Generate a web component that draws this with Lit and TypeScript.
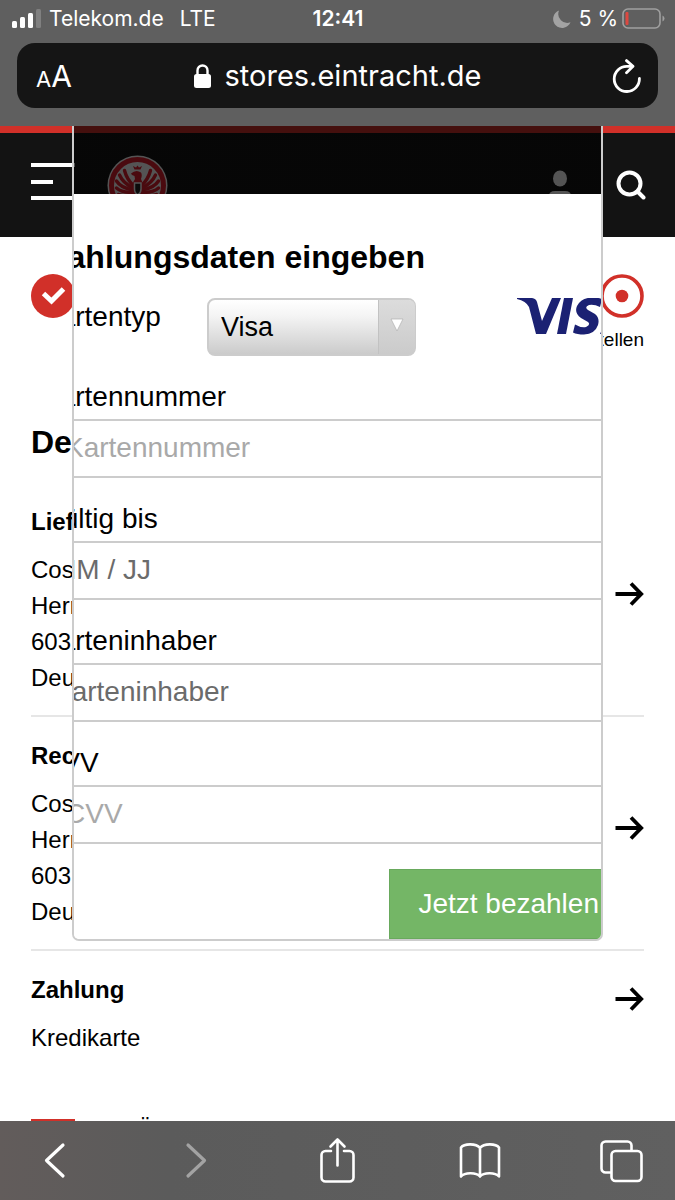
import { LitElement, html, css, svg } from "lit";
import { customElement } from "lit/decorators.js";

interface Section {
  title: string;
  lines: string[];
}

interface Field {
  id: string;
  label: string;
  placeholder: string;
  tone: string;
}

const SECTIONS: Section[] = [
  { title: "Lieferadresse", lines: ["Cos", "Herr", "603", "Deutschland"] },
  { title: "Rechnungsadresse", lines: ["Cos", "Herr", "603", "Deutschland"] },
  { title: "Zahlung", lines: ["Kredikarte"] },
];

const FIELDS: Field[] = [
  { id: "number", label: "Kartennummer", placeholder: "Kartennummer", tone: "secure" },
  { id: "expiry", label: "Gültig bis", placeholder: "MM / JJ", tone: "plain" },
  { id: "holder", label: "Karteninhaber", placeholder: "Karteninhaber", tone: "plain" },
  { id: "cvv", label: "CVV", placeholder: "CVV", tone: "secure" },
];

@customElement("status-bar")
class StatusBar extends LitElement {
  static styles = css`
    :host {
      display: grid;
      grid-template-columns: 1fr auto 1fr;
      align-items: center;
      height: 37px;
      padding: 0 10px 0 11px;
      color: #fff;
      font-size: 21px;
    }
    .side {
      display: flex;
      align-items: center;
    }
    .end {
      justify-content: flex-end;
      gap: 4px;
    }
    .network {
      margin-left: 16px;
    }
    .signal {
      margin-right: 7px;
    }
    .time {
      font-weight: 600;
    }
    .moon {
      margin-right: 4px;
    }
    svg {
      display: block;
    }
  `;

  render() {
    return html`
      <div class="side">
        <svg class="signal" width="31" height="20" viewBox="0 0 31 20" fill="#fff">
          <rect x="1" y="12" width="5" height="7" rx="1.5" />
          <rect x="9" y="8" width="5" height="11" rx="1.5" />
          <rect x="17" y="4" width="5" height="15" rx="1.5" />
          <rect x="25" y="0" width="5" height="19" rx="1.5" fill="#808080" />
        </svg>
        <span>Telekom.de</span>
        <span class="network">LTE</span>
      </div>
      <span class="time">12:41</span>
      <div class="side end">
        <svg class="moon" width="18" height="18" viewBox="0 0 18 18">
          <path d="M6 0.5 A9 9 0 1 0 17.5 12.3 A9 9 0 0 1 6 0.5 Z" fill="#a3a3a3" />
        </svg>
        <span>5 %</span>
        <svg width="43" height="21" viewBox="0 0 43 21">
          <rect x="1" y="1" width="37" height="19" rx="5" fill="none" stroke="#a0a0a0" stroke-width="1.6" />
          <rect x="3.5" y="4" width="3" height="13" rx="1" fill="#dc4840" />
          <path d="M40.5 7.5 Q42.5 8.5 42.5 10.5 T40.5 13.5 Z" fill="#a0a0a0" />
        </svg>
      </div>
    `;
  }
}

@customElement("address-bar")
class AddressBar extends LitElement {
  static styles = css`
    :host {
      display: grid;
      grid-template-columns: 1fr auto 1fr;
      align-items: center;
      height: 65px;
      margin: 6px 17px 18px;
      padding: 0 16px;
      box-sizing: border-box;
      border-radius: 18px;
      background: #151515;
      color: #fff;
    }
    button {
      justify-self: start;
      border: 0;
      padding: 0 3px;
      background: none;
      color: inherit;
      font-family: inherit;
      font-size: 30px;
    }
    .reload {
      justify-self: end;
      padding: 0;
    }
    .small {
      font-size: 22px;
    }
    .address {
      display: flex;
      align-items: center;
      gap: 14px;
      font-size: 29px;
    }
    svg {
      display: block;
    }
  `;

  render() {
    return html`
      <button aria-label="Darstellung"><span class="small">A</span>A</button>
      <div class="address">
        <svg width="17" height="24" viewBox="0 0 17 24">
          <rect x="0" y="10" width="17" height="14" rx="2.5" fill="#fff" />
          <path d="M3.5 11 V6.5 a5 5 0 0 1 10 0 V11" fill="none" stroke="#fff" stroke-width="2.4" />
        </svg>
        <span>stores.eintracht.de</span>
      </div>
      <button class="reload" aria-label="Neu laden">
        <svg width="30" height="34" viewBox="0 0 30 34" fill="none" stroke="#fff" stroke-width="2.8" stroke-linecap="round" stroke-linejoin="round">
          <path d="M27.4 19.5 a12.6 12.6 0 1 1 -12.4 -12.2 h5.5" />
          <path d="M14.5 1.6 L21 7.3 L14.5 13.8" />
        </svg>
      </button>
    `;
  }
}

@customElement("browser-toolbar")
class BrowserToolbar extends LitElement {
  static styles = css`
    :host {
      display: flex;
      align-items: center;
      justify-content: space-between;
      height: 79px;
      padding: 0 32px 0 33px;
      box-sizing: border-box;
      background: linear-gradient(90deg, #625c5b, #5b5b5b 25%, #5d5d5d 60%, #606060);
    }
    button {
      width: 44px;
      height: 48px;
      padding: 0;
      border: 0;
      background: none;
      color: #fff;
    }
    .inactive {
      color: #a3a3a3;
    }
    svg {
      display: block;
    }
  `;

  private icon(label: string, drawing: unknown, cls = "") {
    return html`<button class=${cls} aria-label=${label}>
      <svg width="44" height="48" viewBox="0 0 44 48" fill="none" stroke="currentColor" stroke-width="2.6" stroke-linecap="round" stroke-linejoin="round">${drawing}</svg>
    </button>`;
  }

  render() {
    return html`
      ${this.icon("Zurück", svg`<path d="M30 8 L13.5 23.5 L30 39" stroke-width="3.2" />`)}
      ${this.icon("Vorwärts", svg`<path d="M13 8 L29.5 23.5 L13 39" stroke-width="3.2" />`, "inactive")}
      ${this.icon("Teilen", svg`<path d="M15 14 H9.5 a4 4 0 0 0 -4 4 V40.5 a4 4 0 0 0 4 4 H33.5 a4 4 0 0 0 4 -4 V18 a4 4 0 0 0 -4 -4 H28 M21.5 28.5 V2.5 M14.5 9.5 L21.5 2.5 L28.5 9.5" />`)}
      ${this.icon("Lesezeichen", svg`<path d="M22 39.500 C18.500 35.500 7 35 3 39.500 V10.500 C6 6.500 18 6 22 11 C26 6 38 6.500 41 10.500 V39.500 C37 35 25.500 35.500 22 39.500 V11" />`)}
      ${this.icon("Tabs", svg`<path d="M11.500 35.500 H6.500 a4 4 0 0 1 -4 -4 V8.500 a4 4 0 0 1 4 -4 H28.500 a4 4 0 0 1 4 4 V13" /><rect x="12.500" y="14" width="30" height="30" rx="4" />`)}
    `;
  }
}

@customElement("shop-header")
class ShopHeader extends LitElement {
  static styles = css`
    :host {
      display: flex;
      align-items: center;
      height: 104px;
      padding: 0 29px 0 31px;
      border-top: 7px solid #d13029;
      background: #131313;
    }
    button,
    a {
      display: block;
      padding: 0;
      border: 0;
      background: none;
    }
    .logo {
      flex: 1;
      margin-left: 32px;
    }
    .search {
      margin-left: 44px;
    }
    svg {
      display: block;
    }
  `;

  private wing() {
    return svg`
      <g fill="none" stroke="#e01e2d" stroke-width="3.4" stroke-linecap="round">
        <path d="M27 31 Q20 25 17.500 15.500" />
        <path d="M26 33 Q16 28 12.500 20" />
        <path d="M26 35 Q14 33 9.500 26" />
        <path d="M26 37 Q15 38 9.500 33" />
        <path d="M26 38 Q17 42 11.500 39.500" />
        <path d="M27 39 Q20 45 16 45" />
      </g>
    `;
  }

  render() {
    return html`
      <button aria-label="Menü">
        <svg width="44" height="44" viewBox="0 0 44 44" fill="#fff">
          <rect width="44" height="4" />
          <rect y="17" width="22" height="4" />
          <rect y="33" width="44" height="4" />
        </svg>
      </button>
      <a class="logo" href="#" aria-label="Startseite">
        <svg width="61" height="61" viewBox="0 0 61 61">
          <circle cx="30.5" cy="30.5" r="30" fill="#fff" />
          <circle cx="30.500" cy="30.500" r="26" fill="#fff" stroke="#e01e2d" stroke-width="5" />
          ${this.wing()}
          <g transform="translate(61 0) scale(-1 1)">${this.wing()}</g>
          <g fill="#e01e2d">
            <path d="M27.500 14.500 L26 11 L29 12.500 L30.500 10.500 L32 12.500 L35 11 L33.500 14.500 Z" />
            <path d="M25 20 L24 18.500 Q29 14 34 17.500 Q35.500 20 34 24 L37 31 L36 42 L30.500 52 L25 42 L24 31 L28 24 L27.500 21 Z" />
          </g>
          <path d="M27.500 28 h6.500 v6 q0 4 -3.200 6 q-3.300 -2 -3.300 -6 Z" fill="#222" stroke="#fff" stroke-width="1.500" />
        </svg>
      </a>
      <button aria-label="Konto">
        <svg width="24" height="30" viewBox="0 0 24 30" fill="#fff">
          <ellipse cx="12" cy="8.500" rx="7" ry="8" />
          <path d="M1 30 V26 Q1 21 7 21 H17 Q23 21 23 26 V30 Z" />
        </svg>
      </button>
      <button class="search" aria-label="Suche">
        <svg width="30" height="30" viewBox="0 0 30 30" fill="none" stroke="#fff" stroke-width="4" stroke-linecap="round">
          <circle cx="13.500" cy="13.500" r="11" />
          <path d="M21.500 21.500 L27.500 27.500" />
        </svg>
      </button>
    `;
  }
}

@customElement("checkout-page")
class CheckoutPage extends LitElement {
  static styles = css`
    :host {
      display: block;
      padding: 37px 31px 0;
      color: #000;
      font-size: 24px;
      line-height: 36px;
    }
    .steps {
      display: flex;
      justify-content: space-between;
      height: 78px;
      margin: 0 0 70px;
      padding: 0;
      list-style: none;
    }
    .step {
      display: flex;
      flex-direction: column;
      gap: 10px;
      align-items: flex-end;
      font-size: 19px;
      line-height: 24px;
    }
    h1 {
      margin: 0 0 21px;
      font-size: 32px;
      line-height: 40px;
    }
    section {
      display: flex;
      align-items: center;
      justify-content: space-between;
      border-bottom: 2px solid #e6e6e6;
      background: #fff;
    }
    .text {
      padding: 21px 0 19px;
    }
    section:last-of-type {
      border: 0;
    }
    section:last-of-type .text {
      padding-bottom: 0;
    }
    h2 {
      margin: 0 0 12px;
      font-size: 24px;
      line-height: 36px;
    }
    p {
      margin: 0;
    }
    .edit {
      margin-bottom: 10px;
    }
    .back {
      display: flex;
      gap: 22px;
      margin-top: 60px;
      color: #000;
      font-size: 20px;
      font-weight: 700;
      line-height: 24px;
      text-decoration: none;
    }
    .box {
      width: 44px;
      height: 44px;
      margin-top: 3px;
      background: #d13029;
    }
    svg {
      display: block;
    }
  `;

  private section(s: Section) {
    return html`<section>
      <div class="text">
        <h2>${s.title}</h2>
        ${s.lines.map((line) => html`<p>${line}</p>`)}
      </div>
      <a class="edit" href="#" aria-label="${s.title} ändern">
        <svg width="29" height="24" viewBox="0 0 29 24" fill="none" stroke="#000" stroke-width="3.800">
          <path d="M0.500 12 H26 M16 1.500 L26.200 12 L16 22.500" />
        </svg>
      </a>
    </section>`;
  }

  render() {
    return html`
      <ol class="steps">
        <li class="step">
          <svg width="44" height="44" viewBox="0 0 44 44">
            <circle cx="22" cy="22" r="22" fill="#d13029" />
            <path d="M12.500 19.500 L20.500 27 L32.500 15" fill="none" stroke="#fff" stroke-width="5" />
          </svg>
        </li>
        <li class="step">
          <svg width="44" height="44" viewBox="0 0 44 44">
            <circle cx="22" cy="22" r="20" fill="#fff" stroke="#d13029" stroke-width="3.600" />
            <circle cx="22" cy="22" r="6.300" fill="#d13029" />
          </svg>
          <span>Bestellen</span>
        </li>
      </ol>
      <h1>Details</h1>
      ${SECTIONS.map((s) => this.section(s))}
      <a class="back" href="#"><span class="box"></span>ZURÜCK</a>
    `;
  }
}

@customElement("payment-dialog")
class PaymentDialog extends LitElement {
  static styles = css`
    :host {
      display: block;
      box-sizing: border-box;
      overflow: hidden;
      padding-top: 68px;
      border: 2px solid #ccc;
      border-top: 0;
      border-radius: 0 0 7px 7px;
      background: linear-gradient(rgba(0, 0, 0, 0.67), rgba(0, 0, 0, 0.67)) no-repeat 0 0 / 100% 68px;
      color: #000;
      font-size: 28px;
    }
    .sheet {
      background: #fff;
    }
    form {
      display: flex;
      flex-direction: column;
      margin: 0 -27px 0 -33px;
      padding-top: 43px;
    }
    h2 {
      margin: 0 0 21px;
      padding-left: 7px;
      font-size: 32px;
      line-height: 40px;
    }
    .type {
      display: grid;
      grid-template-columns: 166px 209px 1fr;
      align-items: start;
      height: 58px;
      line-height: 38px;
    }
    .picker {
      display: grid;
      height: 58px;
    }
    select {
      grid-area: 1 / 1;
      appearance: none;
      box-sizing: border-box;
      height: 58px;
      padding: 0 50px 0 12px;
      border: 2px solid #ccc;
      border-radius: 8px;
      background: linear-gradient(#fff, #f4f4f4 30%, #cbcbcb);
      color: #000;
      font-family: inherit;
      font-size: 27px;
    }
    .arrow {
      grid-area: 1 / 1;
      display: grid;
      place-items: center;
      justify-self: end;
      width: 37px;
      margin: 2px 1px 2px 0;
      padding-bottom: 4px;
      box-sizing: border-box;
      border-left: 1px solid #c2c2c2;
      border-radius: 0 6px 6px 0;
      background: linear-gradient(#dcdcdc, #cbcbcb);
      pointer-events: none;
    }
    .brand {
      justify-self: end;
      margin-right: 1px;
    }
    label.above {
      padding: 25px 0 6px;
      line-height: 32px;
    }
    input {
      box-sizing: border-box;
      height: 59px;
      border: 2px solid #ccc;
      padding: 0 10px 2px;
      background: #fff;
      font-family: inherit;
      font-size: 28px;
    }
    input::placeholder {
      opacity: 1;
      color: #6b6b6b;
    }
    input.secure {
      padding-left: 22px;
    }
    input.secure::placeholder {
      color: #a9a9a9;
    }
    .pay {
      align-self: flex-end;
      height: 70px;
      margin-top: 25px;
      padding: 0 28px;
      border: 1px solid #69a95d;
      background: #74b666;
      color: #fff;
      font-family: inherit;
      font-size: 28px;
    }
    svg {
      display: block;
    }
  `;

  render() {
    return html`
      <div class="sheet">
        <form>
          <h2>Zahlungsdaten eingeben</h2>
          <div class="type">
            <label for="type">Kartentyp</label>
            <div class="picker">
              <select id="type">
                <option>Visa</option>
              </select>
              <span class="arrow">
                <svg width="14" height="14" viewBox="0 0 14 14">
                  <path d="M1 1 H13 L7 13 Z" fill="#fff" stroke="#b0b0b0" stroke-width="0.700" />
                </svg>
              </span>
            </div>
            <svg class="brand" width="110" height="38" viewBox="0 0 110 38" fill="#1b2173">
              <path d="M0 0 H15 Q19 0.500 20 4 L25 23 L35 0 H44 L29 36 H19 L12 9 Q9 3 0 1 Z" />
              <path d="M47 0 H56 L49 36 H40 Z" />
              <path d="M85 1 L83 9 Q77 6 72 7 Q67 9 71 12 L78 16 Q83 20 81 27 Q78 36 67 36.500 Q60 36.500 56 34.500 L58 26.500 Q64 30 69 29 Q74 27 71 24 L64 20 Q57 15 60 8 Q64 0 75 -0.500 Q81 -0.500 85 1 Z" />
              <path d="M83 36 L98 3 Q99 0 103 0 H110 V36 H105 V29 H95 L92 36 Z" />
            </svg>
          </div>
          ${FIELDS.map(
            (f) => html`
              <label class="above" for=${f.id}>${f.label}</label>
              <input id=${f.id} class=${f.tone} type="text" placeholder=${f.placeholder} />
            `
          )}
          <button class="pay" type="button">Jetzt bezahlen</button>
        </form>
      </div>
    `;
  }
}

@customElement("app-root")
class AppRoot extends LitElement {
  static styles = css`
    :host {
      display: flex;
      flex-direction: column;
      height: 100vh;
      overflow: hidden;
      background: #fff;
      font-family: "Liberation Sans", Arial, sans-serif;
    }
    .chrome {
      flex: none;
      background: #5f5f5f;
      font-family: Inter, sans-serif;
    }
    main {
      position: relative;
      flex: 1;
      min-height: 0;
      overflow: hidden;
    }
    .dialog {
      position: absolute;
      top: 0;
      left: 72px;
      right: 72px;
    }
    browser-toolbar {
      flex: none;
    }
  `;

  render() {
    return html`
      <div class="chrome">
        <status-bar></status-bar>
        <address-bar></address-bar>
      </div>
      <main>
        <shop-header></shop-header>
        <checkout-page></checkout-page>
        <payment-dialog class="dialog"></payment-dialog>
      </main>
      <browser-toolbar></browser-toolbar>
    `;
  }
}
